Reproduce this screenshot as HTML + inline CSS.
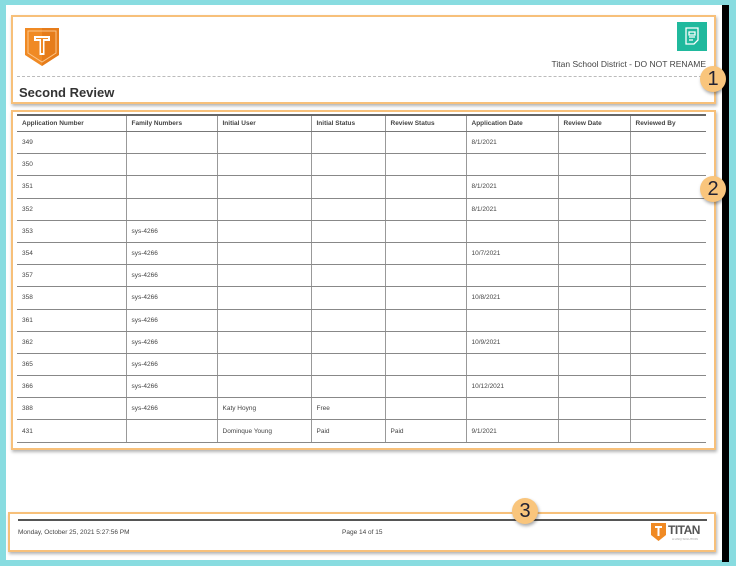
<!DOCTYPE html>
<html><head><style>
body{margin:0;width:736px;height:566px;background:#88dce0;position:relative;overflow:hidden;font-family:"Liberation Sans",sans-serif;}
.page{position:absolute;left:6px;top:5px;width:716px;height:555px;background:#fff;}
.bar{position:absolute;left:722px;top:5px;width:7px;height:557px;background:#000;}
.box{position:absolute;border:2px solid #f7c07a;box-shadow:1px 2px 3px rgba(0,0,0,.3);}
.badge{position:absolute;width:26px;height:26px;border-radius:50%;background:#f9c57c;box-shadow:1px 2px 3px rgba(0,0,0,.35);font-size:20px;color:#223;text-align:center;line-height:27px;}
table{position:absolute;left:17px;top:114px;width:689px;border-collapse:collapse;font-size:6.5px;color:#444;table-layout:fixed;}
th{font-weight:bold;text-align:left;height:15px;padding:0 5px;border-top:2px solid #666;border-bottom:1px solid #777;border-left:1px solid #999;}
td{height:21.2px;padding:0 5px;border-bottom:1px solid #888;border-left:1px solid #999;}
tr>*:first-child{border-left:none;}
</style></head><body>
<div class="page"></div>
<div class="bar"></div>
<div class="box" style="left:11px;top:15px;width:701px;height:85px"></div>
<div class="box" style="left:11px;top:110px;width:701px;height:336px"></div>
<div class="box" style="left:8px;top:512px;width:704px;height:36px"></div>
<svg style="position:absolute;left:25px;top:28px" width="34" height="38" viewBox="0 0 34 38"><path d="M0 0H34V27L17 38L0 27Z" fill="#f08a24"/><path d="M17 0H34V27L17 38Z" fill="#e67c1a"/><path d="M3 3H31V25L17 34L3 25Z" fill="none" stroke="#fbc58a" stroke-width="1"/><path d="M9 8H25V13H19.5V27H14.5V13H9Z" fill="#fff"/><path d="M11 10H23V11H18V25H16V11H11Z" fill="#f08a24"/></svg>
<div style="position:absolute;left:677px;top:22px;width:30px;height:29px;background:#20b99d"></div>
<svg style="position:absolute;left:683px;top:27px" width="18" height="19" viewBox="0 0 18 19" fill="none" stroke="#fff" stroke-width="1.3"><path d="M3 1H15V13L11 17H3Z"/><path d="M6 5H12V8H6Z M6 10H12 M6 13H10"/></svg>
<div style="position:absolute;right:30px;top:59px;font-size:8.5px;color:#444">Titan School District - DO NOT RENAME</div>
<div style="position:absolute;left:17px;top:76px;width:690px;border-top:1px dashed #bbb"></div>
<div style="position:absolute;left:19px;top:85px;font-size:13px;font-weight:bold;color:#333">Second Review</div>
<table>
<colgroup><col style="width:109px"><col style="width:91px"><col style="width:94px"><col style="width:74px"><col style="width:81px"><col style="width:92px"><col style="width:72px"><col style="width:76px"></colgroup>
<tr><th>Application Number</th><th>Family Numbers</th><th>Initial User</th><th>Initial Status</th><th>Review Status</th><th>Application Date</th><th>Review Date</th><th>Reviewed By</th></tr>
<tr><td>349</td><td></td><td></td><td></td><td></td><td>8/1/2021</td><td></td><td></td></tr>
<tr><td>350</td><td></td><td></td><td></td><td></td><td></td><td></td><td></td></tr>
<tr><td>351</td><td></td><td></td><td></td><td></td><td>8/1/2021</td><td></td><td></td></tr>
<tr><td>352</td><td></td><td></td><td></td><td></td><td>8/1/2021</td><td></td><td></td></tr>
<tr><td>353</td><td>sys-4266</td><td></td><td></td><td></td><td></td><td></td><td></td></tr>
<tr><td>354</td><td>sys-4266</td><td></td><td></td><td></td><td>10/7/2021</td><td></td><td></td></tr>
<tr><td>357</td><td>sys-4266</td><td></td><td></td><td></td><td></td><td></td><td></td></tr>
<tr><td>358</td><td>sys-4266</td><td></td><td></td><td></td><td>10/8/2021</td><td></td><td></td></tr>
<tr><td>361</td><td>sys-4266</td><td></td><td></td><td></td><td></td><td></td><td></td></tr>
<tr><td>362</td><td>sys-4266</td><td></td><td></td><td></td><td>10/9/2021</td><td></td><td></td></tr>
<tr><td>365</td><td>sys-4266</td><td></td><td></td><td></td><td></td><td></td><td></td></tr>
<tr><td>366</td><td>sys-4266</td><td></td><td></td><td></td><td>10/12/2021</td><td></td><td></td></tr>
<tr><td>388</td><td>sys-4266</td><td>Katy Hoyng</td><td>Free</td><td></td><td></td><td></td><td></td></tr>
<tr><td>431</td><td></td><td>Dominque Young</td><td>Paid</td><td>Paid</td><td>9/1/2021</td><td></td><td></td></tr>
</table>
<div style="position:absolute;left:18px;top:519px;width:689px;border-top:2px solid #555"></div>
<div style="position:absolute;left:18px;top:529px;font-size:6.5px;color:#444">Monday, October 25, 2021 5:27:56 PM</div>
<div style="position:absolute;left:342px;top:529px;font-size:6.5px;color:#444">Page 14 of 15</div>
<svg style="position:absolute;left:651px;top:523px" width="15" height="18" viewBox="0 0 15 18"><path d="M0 0H15V12L7.5 18L0 12Z" fill="#f08a24"/><path d="M4 3H11V5H8.5V13H6.5V5H4Z" fill="#fff"/></svg>
<div style="position:absolute;left:668px;top:523px;font-size:12px;font-weight:bold;color:#555;letter-spacing:-0.5px">TITAN</div>
<div style="position:absolute;left:672px;top:537px;font-size:3px;color:#999">A LINQ SOLUTION</div>
<div class="badge" style="left:700px;top:66px">1</div>
<div class="badge" style="left:700px;top:176px">2</div>
<div class="badge" style="left:512px;top:498px">3</div>
</body></html>
